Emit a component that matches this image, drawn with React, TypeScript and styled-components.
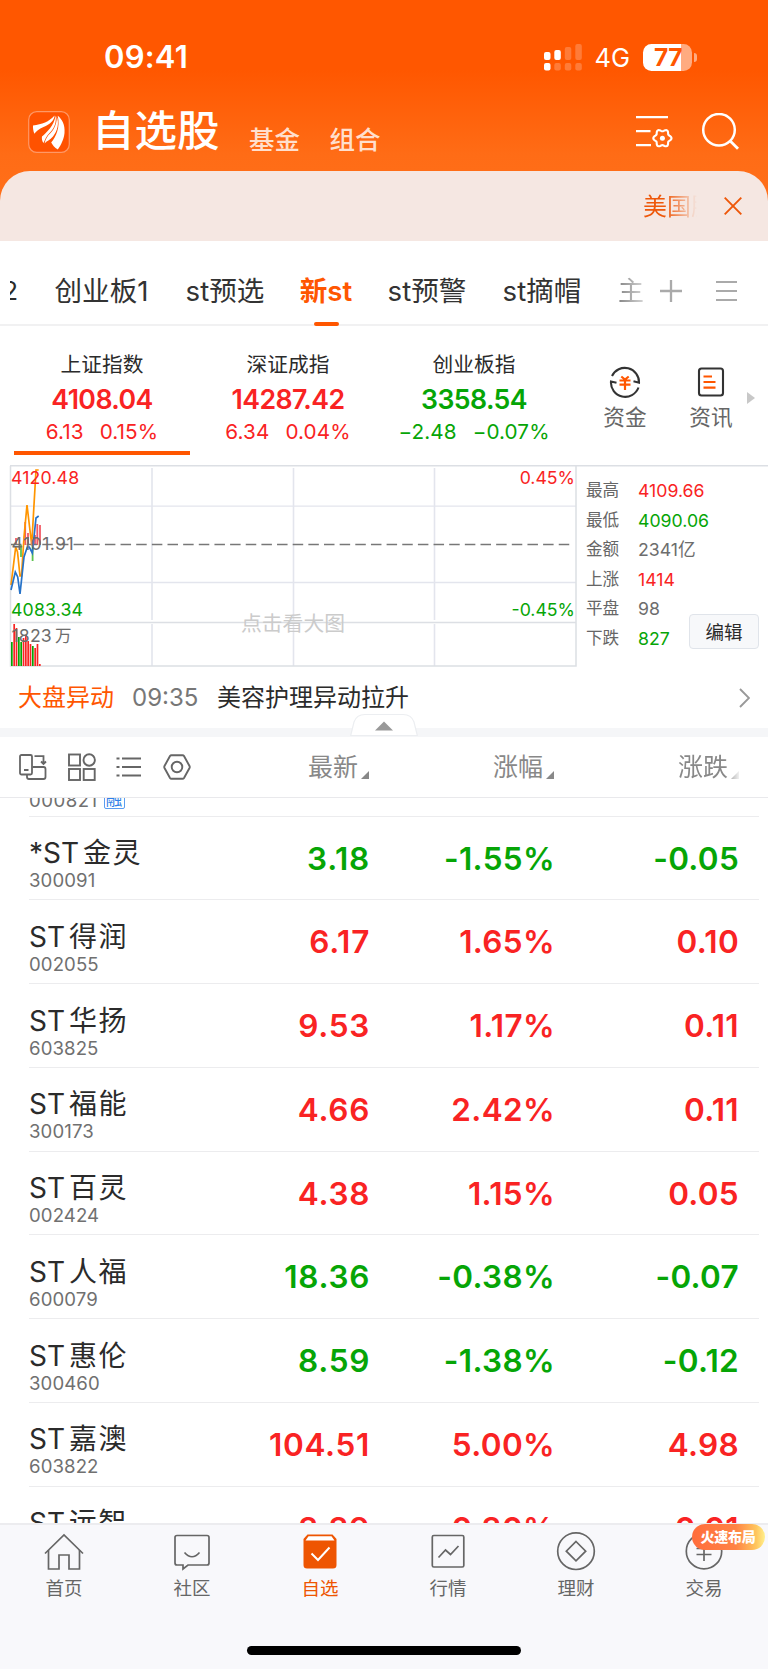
import React from 'react';
import styled, { createGlobalStyle, css } from 'styled-components';

const RED = '#f92323';
const GREEN = '#06a506';
const ORANGE = '#ff5600';

const Global = createGlobalStyle`
  * { box-sizing: border-box; }
  html, body { margin: 0; padding: 0; background: #fff; }
  body {
    font-family: Inter, 'Noto Sans CJK SC', sans-serif;
    color: #2b2b2b;
    -webkit-font-smoothing: antialiased;
  }
  svg { display: block; flex: none; }
`;

type Tone = 'up' | 'down' | 'flat';
const toneColor = (t: Tone) => (t === 'up' ? RED : t === 'down' ? GREEN : '#6d6d6d');

const Screen = styled.div`
  width: 768px;
  height: 1669px;
  display: flex;
  flex-direction: column;
  overflow: hidden;
  background: #fff;
`;

/* ---------- header ---------- */

const Hero = styled.header`
  height: 241px;
  flex: none;
  display: flex;
  flex-direction: column;
  background: linear-gradient(180deg, #ff5700 0, #ff5700 70px, #ff6c16 155px, #ff721c 241px);
`;

const StatusBar = styled.div`
  height: 92px;
  display: flex;
  align-items: center;
  padding: 22px 71px 0 104px;
  color: #fff;
`;

const Clock = styled.span`
  flex: 1;
  font-size: 31px;
  font-weight: 600;
  line-height: 36px;
  letter-spacing: 0.2px;
`;

const Network = styled.span`
  font-size: 25.5px;
  font-weight: 400;
  line-height: 36px;
  margin: 2px 13px 0 13px;
`;

const Battery = styled.div`
  width: 49px;
  height: 27px;
  margin-right: 2px;
  border-radius: 8.5px;
  background: linear-gradient(90deg, #fff 38px, #ffab80 38px);
  color: ${ORANGE};
  font-size: 24.5px;
  font-weight: 700;
  line-height: 27px;
  letter-spacing: -0.5px;
  padding-left: 11px;
`;

const BatteryTip = styled.div`
  width: 3px;
  height: 9px;
  border-radius: 0 4px 4px 0;
  background: #ffab80;
`;

const TitleBar = styled.div`
  height: 79px;
  display: flex;
  align-items: center;
  padding: 0 29px 0 28px;
  color: #fff;
`;

const Title = styled.h1`
  margin: -2px 0 0 22px;
  font-size: 42.5px;
  font-weight: 500;
  line-height: 50px;
`;

const TitleLink = styled.span`
  margin: 16px 0 0 29.5px;
  font-size: 25.5px;
  line-height: 32px;
  font-weight: 500;
  color: #ffdfcd;
`;

const Spacer = styled.div`
  flex: 1;
`;

const Banner = styled.div`
  height: 70px;
  display: flex;
  align-items: center;
  justify-content: flex-end;
  padding-right: 26px;
  border-radius: 30px 30px 0 0;
  background: #f5e7e2;
`;

const Marquee = styled.div`
  width: 54px;
  margin: 2px 27px 0 0;
  overflow: hidden;
  white-space: nowrap;
  font-size: 24px;
  line-height: 32px;
  color: #ee5709;
  mask-image: linear-gradient(90deg, #000 40%, transparent 100%);
`;

/* ---------- group tabs ---------- */

const Tabs = styled.nav`
  height: 85px;
  flex: none;
  display: flex;
  align-items: center;
  padding: 17px 31px 0 10px;
  border-bottom: 2px solid #f1f1f2;
`;

const ClippedTab = styled.span`
  width: 8px;
  margin-right: 36px;
  overflow: hidden;
  display: flex;
  justify-content: flex-end;
  font-size: 26px;
  line-height: 40px;
`;

const Tab = styled.span<{ $active?: boolean; $w: number }>`
  width: ${(p) => p.$w}px;
  height: 70px;
  display: flex;
  flex-direction: column;
  align-items: center;
  white-space: nowrap;
  font-size: 27.6px;
  line-height: 70px;
  color: #333;
  ${(p) =>
    p.$active &&
    css`
      color: ${ORANGE};
      font-weight: 600;
      &::after {
        content: '';
        width: 25px;
        height: 4px;
        flex: none;
        margin-top: -4px;
        border-radius: 2px;
        background: ${ORANGE};
      }
    `}
`;

const FadingTab = styled.span`
  width: 28px;
  margin-right: 14px;
  font-size: 26px;
  line-height: 40px;
  color: #777;
  mask-image: linear-gradient(90deg, rgba(0, 0, 0, 0.9), rgba(0, 0, 0, 0.25));
`;

/* ---------- indices ---------- */

const Indices = styled.section`
  height: 139px;
  flex: none;
  display: flex;
  padding-left: 9px;
`;

const IndexCard = styled.div<{ $active?: boolean }>`
  width: 186px;
  display: flex;
  flex-direction: column;
  align-items: center;
  padding-top: 24px;
  &::after {
    content: '';
    width: 176px;
    height: 4px;
    margin-top: 7px;
    background: ${(p) => (p.$active ? ORANGE : 'transparent')};
  }
`;

const IndexName = styled.span`
  font-size: 20.7px;
  line-height: 30px;
`;

const IndexValue = styled.span<{ $tone: Tone }>`
  margin-top: 4px;
  font-size: 26.7px;
  font-weight: 600;
  line-height: 30px;
  letter-spacing: -0.6px;
  color: ${(p) => toneColor(p.$tone)};
`;

const IndexChange = styled.span<{ $tone: Tone }>`
  margin-top: 5px;
  display: flex;
  gap: 16px;
  font-size: 20.7px;
  line-height: 25px;
  letter-spacing: 0.1px;
  color: ${(p) => toneColor(p.$tone)};
`;

const Shortcut = styled.div`
  width: 86px;
  display: flex;
  flex-direction: column;
  align-items: center;
  gap: 1px;
  padding-top: 40px;
  font-size: 21.7px;
  line-height: 36px;
  color: #666;
`;

const Shortcuts = styled.div`
  display: flex;
  margin-left: 15px;
`;

const MoreArrow = styled.div`
  width: 0;
  height: 0;
  margin: 66px 0 0 -7px;
  border-left: 8px solid #c8c8c8;
  border-top: 6px solid transparent;
  border-bottom: 6px solid transparent;
`;

/* ---------- chart ---------- */

const ChartPanel = styled.section`
  height: 203px;
  flex: none;
  display: flex;
  background: linear-gradient(#dcdfe4, #dcdfe4) 10px 0 / 100% 1.5px no-repeat;
`;

const Stats = styled.dl`
  margin: 0;
  width: 130px;
  flex: none;
  padding: 11px 0 0 6px;
`;

const StatLine = styled.div<{ $tone: Tone }>`
  height: 29.6px;
  display: flex;
  white-space: nowrap;
  line-height: 29.6px;
  dt {
    width: 52px;
    flex: none;
    font-size: 16.6px;
    color: #666;
  }
  dd {
    margin: 0;
    font-size: 17.7px;
    color: ${(p) => toneColor(p.$tone)};
  }
`;

const EditButton = styled.button`
  width: 70px;
  height: 35px;
  flex: none;
  margin: 149px 0 0 -21px;
  padding: 0;
  border: 1.5px solid #e0e4ea;
  border-radius: 4px;
  background: #f7f8fa;
  font-family: inherit;
  font-size: 18.5px;
  line-height: 32px;
  color: #2b2b2b;
`;

/* ---------- news ---------- */

const News = styled.section`
  height: 60px;
  flex: none;
  display: flex;
  align-items: center;
  padding: 0 18px;
  font-size: 24px;
  line-height: 36px;
`;

const NewsTag = styled.span`
  color: ${ORANGE};
  margin-right: 18px;
`;
const NewsTime = styled.span`
  color: #777;
  width: 85px;
`;
const NewsTitle = styled.span`
  flex: 1;
`;

const Divider = styled.div`
  height: 9px;
  flex: none;
  background: #f5f6f8;
  position: relative;
`;

const Collapse = styled.div`
  position: absolute;
  left: 350px;
  top: -15px;
`;

/* ---------- table ---------- */

const Toolbar = styled.div`
  height: 61px;
  flex: none;
  display: flex;
  align-items: center;
  padding: 0 29px 0 19px;
  border-bottom: 1.5px solid #e9e9ec;
`;

const ToolIcons = styled.div`
  width: 172px;
  display: flex;
  justify-content: space-between;
  align-items: center;
`;

const ColumnHead = styled.div<{ $w: number; $fade?: boolean }>`
  width: ${(p) => p.$w}px;
  display: flex;
  align-items: center;
  justify-content: flex-end;
  font-size: 25px;
  line-height: 36px;
  color: #888;
  &::after {
    content: '';
    margin: 15px 0 0 3px;
    border-left: 8px solid transparent;
    border-bottom: 8px solid #888;
  }
  mask-image: ${(p) => (p.$fade ? 'linear-gradient(90deg, #000 78%, rgba(0,0,0,.12) 100%)' : 'none')};
`;

const List = styled.section`
  flex: 1;
  min-height: 0;
  overflow: hidden;
  padding: 0 9px 0 29px;
`;

const Row = styled.div`
  height: 83.77px;
  display: flex;
  border-bottom: 1.5px solid #ececee;
`;

const PartialRow = styled(Row)`
  height: 18.5px;
  align-items: flex-end;
`;

const NameCell = styled.div`
  width: 155px;
  display: flex;
  flex-direction: column;
  padding-top: 17.5px;
`;

const StockName = styled.span`
  height: 38px;
  display: flex;
  gap: 4px;
  white-space: nowrap;
  font-size: 28px;
  line-height: 38px;
  color: #2b2b2b;
`;

const Cjk = styled.span`
  letter-spacing: 1.4px;
`;

const Code = styled.span`
  margin-top: -3px;
  font-size: 18.6px;
  line-height: 22px;
  letter-spacing: 0.1px;
  color: #707070;
`;

const ScrolledCode = styled(Code)`
  margin: 0 0 5px;
  letter-spacing: 0.5px;
`;

const Badge = styled.span`
  width: 21px;
  height: 19px;
  margin: 0 0 7px 6px;
  flex: none;
  border: 1.5px solid #5a9df0;
  border-radius: 2px;
  font-size: 16.5px;
  line-height: 16px;
  text-align: center;
  color: #2f80e8;
`;

const Value = styled.span<{ $tone: Tone; $w: number; $track: number }>`
  width: ${(p) => p.$w}px;
  text-align: right;
  font-size: 31.5px;
  font-weight: 600;
  line-height: 83px;
  letter-spacing: ${(p) => p.$track}px;
  color: ${(p) => toneColor(p.$tone)};
`;

/* ---------- bottom bar ---------- */

const BottomBar = styled.footer`
  height: 146px;
  flex: none;
  display: flex;
  flex-direction: column;
  align-items: center;
  background: #f8f8fb;
  border-top: 2px solid #ececef;
`;

const BottomItems = styled.div`
  width: 768px;
  height: 120.5px;
  display: flex;
`;

const BottomItem = styled.div<{ $active?: boolean }>`
  width: 128px;
  position: relative;
  display: flex;
  flex-direction: column;
  align-items: center;
  padding-top: 7px;
  font-size: 18.5px;
  line-height: 32px;
  color: ${(p) => (p.$active ? '#ee5502' : '#666')};
`;

const Promo = styled.span`
  position: absolute;
  left: 51.5px;
  top: -1px;
  width: 73px;
  height: 26px;
  border-radius: 13px;
  background: linear-gradient(90deg, #ff6d3c 0%, #ff8345 60%, #ffc65e 88%, #fff08c 100%);
  color: #fff;
  font-size: 14px;
  font-weight: 900;
  line-height: 25px;
  text-align: center;
  letter-spacing: -0.3px;
`;

const HomeIndicator = styled.div`
  width: 274px;
  height: 9px;
  border-radius: 5px;
  background: #000;
`;

/* ---------- icons ---------- */

const Logo = () => (
  <svg width="42" height="42" viewBox="0 0 42 42">
    <rect x=".7" y=".7" width="40.6" height="40.6" rx="8" fill="#ff5200" stroke="#ff9866" strokeWidth="1.2" />
    <g fill="#fff">
      <path d="M5 14.5C14 13 21 11 26.5 4.5C26.6 9 22 13.5 15.5 16C11 18 8 20.5 6.4 22.7C5.3 20 4.8 17 5 14.5Z" />
      <path d="M27.6 4.5C28.6 11 26.5 17.500 21.500 22C18.500 25 17 28.500 15.500 32C14 30 13.600 27.500 14 25.500C18.500 21.500 26 15 27.600 4.500Z" />
      <path d="M29.700 4.800C34 8 37.300 14 36.500 22C36 28 33 34 29.800 38.600C26.500 36.500 24.500 34 23.200 31.500C28 26 32.500 16 29.700 4.800Z" />
      <path d="M28.600 5C31.500 12 29.500 20 25 25.500C22 29 18.500 30 16.600 32.500C17.500 28 19.500 25 22.300 22.300C27 17.500 29.300 11 28.600 5Z" />
    </g>
  </svg>
);

const Signal = () => (
  <svg width="38" height="27" viewBox="0 0 38 27" fill="#fff">
    <rect x="0" y="8" width="6.5" height="8" rx="2" />
    <rect x="10.3" y="6" width="6.5" height="10" rx="2" />
    <rect x="20.8" y="3" width="6.5" height="13" rx="2" opacity=".22" />
    <rect x="31.3" y="0" width="6.5" height="16" rx="2" opacity=".22" />
    <rect x="0" y="19" width="6.5" height="7.5" rx="2" />
    <rect x="10.3" y="19" width="6.5" height="7.5" rx="2" opacity=".22" />
    <rect x="20.8" y="19" width="6.5" height="7.5" rx="2" opacity=".22" />
    <rect x="31.3" y="19" width="6.5" height="7.5" rx="2" opacity=".22" />
  </svg>
);

const gearPath = (cx: number, cy: number) => {
  const pts: string[] = [];
  for (let i = 0; i < 72; i++) {
    const a = (i / 72) * Math.PI * 2;
    const r = 8 + 1.1 * Math.cos(6 * a);
    pts.push(`${(cx + r * Math.cos(a)).toFixed(2)} ${(cy + r * Math.sin(a)).toFixed(2)}`);
  }
  return `M${pts.join('L')}Z`;
};

const ListGear = () => (
  <svg width="38" height="36" viewBox="0 0 38 36" fill="none" stroke="#fff" strokeWidth="2.3">
    <path d="M0 3.2H32M0 17.2H14.5M0 31.2H15" />
    <path d={gearPath(26.4, 24.2)} strokeWidth="2.1" />
    <circle cx="26.4" cy="24.2" r="2.5" fill="#fff" stroke="none" />
  </svg>
);

const Search = () => (
  <svg width="38" height="38" viewBox="0 0 38 38" fill="none" stroke="#fff" strokeWidth="2.5">
    <circle cx="18" cy="16.8" r="15.8" />
    <path d="M29.2 28L37 35.8" strokeWidth="2.8" />
  </svg>
);

const Funds = () => (
  <svg width="32" height="32" viewBox="0 0 32 32" fill="none">
    <g stroke="#333" strokeWidth="2.1">
      <path d="M3 10A14.2 14.2 0 0 1 30 16.7L24.5 15.3" />
      <path d="M29.5 21.5A14.2 14.2 0 0 1 2 15.5L7.5 16.7" />
    </g>
    <path d="M12.3 10.5L16 13.5L19.7 10.5M10.5 14.5H21.5M10.5 18.6H21.5M16 13.5V24" stroke={ORANGE} strokeWidth="2.2" />
  </svg>
);

const NewsIcon = () => (
  <svg width="32" height="32" viewBox="0 0 32 32" fill="none">
    <rect x="4" y="2.5" width="24" height="27" rx="2.5" stroke="#333" strokeWidth="2.1" />
    <path d="M8.5 10.5H17M8.5 16H20.5M8.5 21.7H20.5" stroke={ORANGE} strokeWidth="2.2" />
  </svg>
);

const RotateIcon = () => (
  <svg width="28" height="26" viewBox="0 0 28 26" fill="none" stroke="#666" strokeWidth="1.8">
    <rect x="1" y="1" width="12" height="19.5" rx="1.5" />
    <path d="M5 16H9.500M15.500 2.200H24.500V8.500M22 7.500L24.500 10L27 7.500M13.500 13H24.500Q26.500 13 26.500 15V23Q26.500 25 24.500 25H10Q8 25 8 23V20.500" />
  </svg>
);

const GridIcon = () => (
  <svg width="28" height="28" viewBox="0 0 28 28" fill="none" stroke="#666" strokeWidth="1.9">
    <rect x="1" y="1.5" width="11" height="11" />
    <circle cx="21.2" cy="7" r="5.7" />
    <rect x="1" y="16" width="11" height="11" />
    <rect x="15.7" y="16" width="11" height="11" />
  </svg>
);

const ListIcon = () => (
  <svg width="26" height="22" viewBox="0 0 26 22" fill="none" stroke="#666" strokeWidth="2.1">
    <path d="M6 2.5H25M6 11H25M6 19.5H25M.5 2.5H3.5M.5 11H3.5M.5 19.5H3.5" />
  </svg>
);

const HexIcon = () => (
  <svg width="28" height="26" viewBox="0 0 28 26" fill="none" stroke="#666" strokeWidth="1.9" strokeLinejoin="round">
    <path d="M8.5 1.2H19.5Q20.5 1.2 21 2L26.5 12Q27 13 26.5 14L21 24Q20.5 24.8 19.5 24.8H8.5Q7.5 24.8 7 24L1.5 14Q1 13 1.5 12L7 2Q7.5 1.2 8.5 1.2Z" />
    <circle cx="14" cy="13" r="5.3" />
  </svg>
);

const barIcon: Record<string, React.ReactNode> = {
  首页: (
    <g>
      <path d="M1 21.500L20 3L39 21.500" />
      <path d="M4.500 18V37H15V23H25V37H35.500V18" />
    </g>
  ),
  社区: <path d="M5 3.500H35Q37 3.500 37 5.500V31Q37 33 35 33H16L11 37V33H5Q3 33 3 31V5.500Q3 3.500 5 3.500ZM12.500 20.500Q20 29 27.500 20.500" />,
  自选: (
    <g stroke="none">
      <path d="M7.500 2.500H32.500L36.500 7V33Q36.500 36.500 33 36.500H7Q3.500 36.500 3.500 33V7Z" fill="#ee5502" />
      <path d="M8.500 4.300H31.500L34.500 8.500H5.500Z" fill="#fff" />
      <path d="M11.500 21.500L18 28L29.500 15.500" fill="none" stroke="#fff" strokeWidth="2" />
    </g>
  ),
  行情: (
    <g>
      <rect x="4.3" y="3.5" width="31.5" height="31.5" rx="1.5" />
      <path d="M10.500 25.500L17.500 18L22.500 22.500L30.500 14" />
    </g>
  ),
  理财: (
    <g>
      <circle cx="20" cy="19.2" r="18.3" />
      <path d="M20 9.500L29.700 19.200L20 28.900L10.300 19.200Z" />
    </g>
  ),
  交易: (
    <g>
      <circle cx="20" cy="19.2" r="17.7" />
      <path d="M12.500 16.500H27.500M12.500 22.500H27.500M20 16.500V29M14 9L20 16L26 9" />
    </g>
  ),
};

/* ---------- intraday chart ---------- */

const priceBars: [number, number, number, Tone][] = [
  [16, 538, 545, 'up'],
  [21, 545, 557, 'down'],
  [25.2, 522, 545, 'up'],
  [28, 533, 545, 'up'],
  [32.6, 545, 561, 'down'],
  [35, 535, 545, 'up'],
  [37.3, 524, 545, 'up'],
  [40, 525, 545, 'up'],
];

const volumes: [number, Tone][] = [
  [24, 'down'], [42, 'up'], [38, 'up'], [29, 'down'], [24, 'down'], [28, 'up'], [31, 'up'],
  [25, 'up'], [22, 'up'], [20, 'down'], [18, 'up'], [22, 'up'], [2, 'up'],
];

const Chart = () => (
  <svg width="580" height="203" viewBox="0 465 580 203" fontFamily="Inter, 'Noto Sans CJK SC', sans-serif" fontSize="17.7">
    <g stroke="#e3e5ed" strokeWidth="1.3" fill="none">
      <path d="M11 506.200H576M11 582.500H576" />
      <path d="M152 468V620M293.500 468V620M434.500 468V620M152 624V666M293.500 624V666M434.500 624V666" strokeWidth="1.6" />
      <path d="M10.500 466V666H576V466M10.500 622.500H576" stroke="#dcdfe4" strokeWidth="1.5" />
    </g>
    <text x="241" y="630.5" fontSize="20.8" fill="#cbcbcb">点击看大图</text>
    {priceBars.map(([x, a, b, t]) => (
      <rect key={x} x={x - 0.9} y={a} width="1.8" height={b - a} fill={t === 'up' ? '#f25a66' : '#5cc24e'} />
    ))}
    {volumes.map(([h, t], i) => (
      <rect key={i} x={11 + i * 2.33} y={666 - h} width="1.7" height={h} fill={toneColor(t)} />
    ))}
    <path d="M11 544.500H572" stroke="#777" strokeWidth="1.4" strokeDasharray="10.5 5.15" />
    <g fill="none" strokeWidth="1.7">
      <path d="M11 585L15.700 547L17.500 552L20 576L21.500 576L24 537L27 505L31.700 545L36 470H38.700" stroke="#ff9500" />
      <path d="M11 590L15.300 572L17.700 577L20 594L24 557L27.300 547H29.300L32.300 553L36 518L38.700 516" stroke="#2672c8" />
    </g>
    <g letterSpacing=".15">
      <text x="11" y="484" fill={RED}>4120.48</text>
      <text x="11.5" y="550" letterSpacing=".4" fill="#6d6d6d">4101.91</text>
      <text x="11" y="616" fill={GREEN}>4083.34</text>
      <text x="11.500" y="641.500" fill="#6d6d6d">1823<tspan dx="3" fontSize="16.5">万</tspan></text>
    </g>
    <text x="575" y="484" textAnchor="end" fill={RED}>0.45%</text>
    <text x="575" y="616" textAnchor="end" fill={GREEN}>-0.45%</text>
  </svg>
);

/* ---------- data ---------- */

const indices: [string, string, string, string, Tone][] = [
  ['上证指数', '4108.04', '6.13', '0.15%', 'up'],
  ['深证成指', '14287.42', '6.34', '0.04%', 'up'],
  ['创业板指', '3358.54', '−2.48', '−0.07%', 'down'],
];

const stats: [string, string, Tone][] = [
  ['最高', '4109.66', 'up'],
  ['最低', '4090.06', 'down'],
  ['金额', '2341亿', 'flat'],
  ['上涨', '1414', 'up'],
  ['平盘', '98', 'flat'],
  ['下跌', '827', 'down'],
];

const stocks: [string, string, string, string, string, string, Tone][] = [
  ['*ST', '金灵', '300091', '3.18', '-1.55%', '-0.05', 'down'],
  ['ST', '得润', '002055', '6.17', '1.65%', '0.10', 'up'],
  ['ST', '华扬', '603825', '9.53', '1.17%', '0.11', 'up'],
  ['ST', '福能', '300173', '4.66', '2.42%', '0.11', 'up'],
  ['ST', '百灵', '002424', '4.38', '1.15%', '0.05', 'up'],
  ['ST', '人福', '600079', '18.36', '-0.38%', '-0.07', 'down'],
  ['ST', '惠伦', '300460', '8.59', '-1.38%', '-0.12', 'down'],
  ['ST', '嘉澳', '603822', '104.51', '5.00%', '4.98', 'up'],
  ['ST', '远智', '002689', '3.39', '0.30%', '0.01', 'up'],
];

const Gap = styled.i<{ $w: number }>`
  width: ${(p) => p.$w}px;
  flex: none;
`;

export default function App() {
  return (
    <Screen>
      <Global />
      <Hero>
        <StatusBar>
          <Clock>09:41</Clock>
          <Signal />
          <Network>4G</Network>
          <Battery>77</Battery>
          <BatteryTip />
        </StatusBar>
        <TitleBar>
          <Logo />
          <Title>自选股</Title>
          <TitleLink>基金</TitleLink>
          <TitleLink>组合</TitleLink>
          <Spacer />
          <ListGear />
          <Gap $w={27} />
          <Search />
        </TitleBar>
        <Banner>
          <Marquee>美国股</Marquee>
          <svg width="18" height="18" viewBox="0 0 18 18" stroke="#ee5709" strokeWidth="1.9">
            <path d="M.7 .7L17.300 17.300M17.300 .7L.7 17.300" />
          </svg>
        </Banner>
      </Hero>

      <Tabs>
        <ClippedTab>2</ClippedTab>
        <Tab $w={95}>创业板1</Tab>
        <Gap $w={36} />
        <Tab $w={80}>st预选</Tab>
        <Gap $w={35} />
        <Tab $w={52} $active>新st</Tab>
        <Gap $w={35} />
        <Tab $w={80}>st预警</Tab>
        <Gap $w={35} />
        <Tab $w={80}>st摘帽</Tab>
        <Gap $w={36} />
        <FadingTab>主</FadingTab>
        <svg width="22" height="22" viewBox="0 0 22 22" stroke="#aaa" strokeWidth="2.3">
          <path d="M0 11H22M11 0V22" />
        </svg>
        <Spacer />
        <svg width="21" height="22" viewBox="0 0 21 22" stroke="#aaa" strokeWidth="2.2">
          <path d="M0 2H21M0 11H21M0 20H21" />
        </svg>
      </Tabs>

      <Indices>
        {indices.map(([name, value, diff, pct, tone], i) => (
          <IndexCard key={name} $active={i === 0}>
            <IndexName>{name}</IndexName>
            <IndexValue $tone={tone}>{value}</IndexValue>
            <IndexChange $tone={tone}>
              <span>{diff}</span>
              <span>{pct}</span>
            </IndexChange>
          </IndexCard>
        ))}
        <Shortcuts>
          <Shortcut>
            <Funds />
            资金
          </Shortcut>
          <Shortcut>
            <NewsIcon />
            资讯
          </Shortcut>
        </Shortcuts>
        <MoreArrow />
      </Indices>

      <ChartPanel>
        <Chart />
        <Stats>
          {stats.map(([label, value, tone]) => (
            <StatLine key={label} $tone={tone}>
              <dt>{label}</dt>
              <dd>{value}</dd>
            </StatLine>
          ))}
        </Stats>
        <EditButton>编辑</EditButton>
      </ChartPanel>

      <News>
        <NewsTag>大盘异动</NewsTag>
        <NewsTime>09:35</NewsTime>
        <NewsTitle>美容护理异动拉升</NewsTitle>
        <svg width="11" height="20" viewBox="0 0 11 20" fill="none" stroke="#999" strokeWidth="1.9">
          <path d="M1 1L10 10L1 19" />
        </svg>
      </News>

      <Divider>
        <Collapse>
          <svg width="68" height="24" viewBox="0 0 68 24">
            <path d="M.7 22.500L4 9Q6.500 1.500 15 1.500H53Q61.500 1.500 64 9L67.300 22.500Z" fill="#fff" stroke="#eceef1" strokeWidth="1.2" />
            <path d="M25 17.500L34 8.500L43 17.500Z" fill="#999" />
          </svg>
        </Collapse>
      </Divider>

      <Toolbar>
        <ToolIcons>
          <RotateIcon />
          <GridIcon />
          <ListIcon />
          <HexIcon />
        </ToolIcons>
        <ColumnHead $w={178}>最新</ColumnHead>
        <ColumnHead $w={185}>涨幅</ColumnHead>
        <Gap $w={120} />
        <ColumnHead $w={65} $fade>涨跌</ColumnHead>
      </Toolbar>

      <List>
        <PartialRow>
          <ScrolledCode>000821</ScrolledCode>
          <Badge>融</Badge>
        </PartialRow>
        {stocks.map(([prefix, name, code, last, pct, diff, tone]) => (
          <Row key={code}>
            <NameCell>
              <StockName>
                {prefix}
                <Cjk>{name}</Cjk>
              </StockName>
              <Code>{code}</Code>
            </NameCell>
            <Value $w={186} $track={0.7} $tone={tone}>{last}</Value>
            <Value $w={185} $track={0.35} $tone={tone}>{pct}</Value>
            <Value $w={184} $track={0.3} $tone={tone}>{diff}</Value>
          </Row>
        ))}
      </List>

      <BottomBar>
        <BottomItems>
          {Object.keys(barIcon).map((label) => (
            <BottomItem key={label} $active={label === '自选'}>
              <svg width="40" height="40" viewBox="0 0 40 40" fill="none" stroke="#666" strokeWidth="1.7">
                {barIcon[label]}
              </svg>
              {label}
              {label === '交易' && <Promo>火速布局</Promo>}
            </BottomItem>
          ))}
        </BottomItems>
        <HomeIndicator />
      </BottomBar>
    </Screen>
  );
}
